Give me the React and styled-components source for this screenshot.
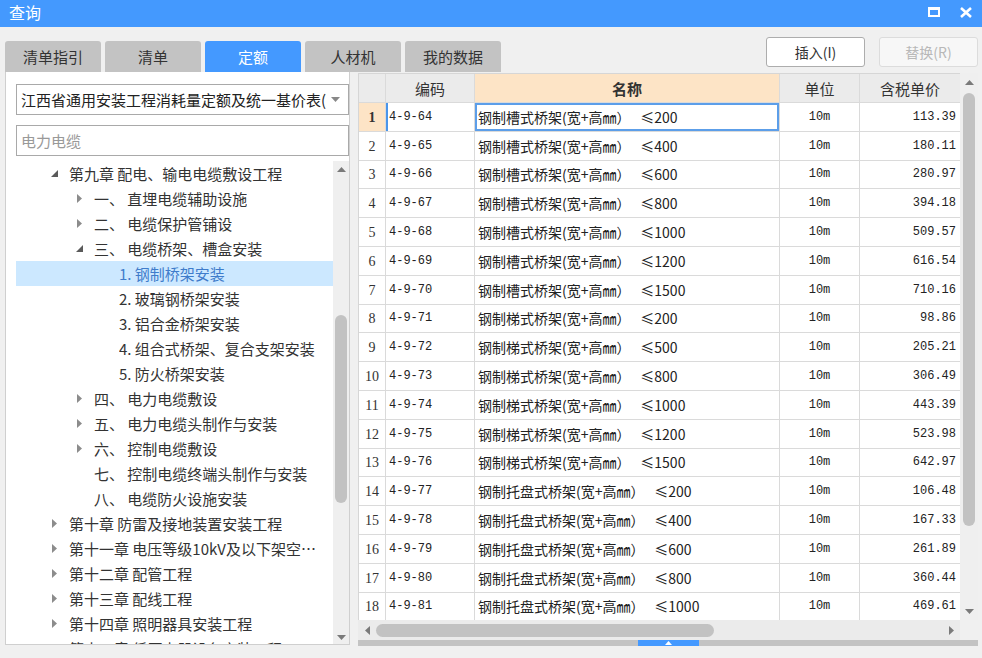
import React from 'react';
import styled, { createGlobalStyle } from 'styled-components';

const GlobalStyle = createGlobalStyle`
  html, body {
    margin: 0;
    padding: 0;
    background: #f0f0f0;
  }
  body {
    font-family: "Noto Sans CJK SC", "Noto Sans", sans-serif;
  }
  * {
    box-sizing: border-box;
  }
`;

const tabs = ['清单指引', '清单', '定额', '人材机', '我的数据'];

const tree = [
  { level: 0, label: '第九章 配电、输电电缆敷设工程', arrow: 'open' },
  { level: 1, label: '一、 直埋电缆辅助设施', arrow: 'closed' },
  { level: 1, label: '二、 电缆保护管铺设', arrow: 'closed' },
  { level: 1, label: '三、 电缆桥架、槽盒安装', arrow: 'open' },
  { level: 2, label: '1. 钢制桥架安装', selected: true },
  { level: 2, label: '2. 玻璃钢桥架安装' },
  { level: 2, label: '3. 铝合金桥架安装' },
  { level: 2, label: '4. 组合式桥架、复合支架安装' },
  { level: 2, label: '5. 防火桥架安装' },
  { level: 1, label: '四、 电力电缆敷设', arrow: 'closed' },
  { level: 1, label: '五、 电力电缆头制作与安装', arrow: 'closed' },
  { level: 1, label: '六、 控制电缆敷设', arrow: 'closed' },
  { level: 1, label: '七、 控制电缆终端头制作与安装' },
  { level: 1, label: '八、 电缆防火设施安装' },
  { level: 0, label: '第十章 防雷及接地装置安装工程', arrow: 'closed' },
  { level: 0, label: '第十一章 电压等级10kV及以下架空配电线路工程', arrow: 'closed' },
  { level: 0, label: '第十二章 配管工程', arrow: 'closed' },
  { level: 0, label: '第十三章 配线工程', arrow: 'closed' },
  { level: 0, label: '第十四章 照明器具安装工程', arrow: 'closed' },
  { level: 0, label: '第十五章 低压电器设备安装工程', arrow: 'closed' },
];

const rows = [
  ['4-9-64', '钢制槽式桥架', '200', '113.39'],
  ['4-9-65', '钢制槽式桥架', '400', '180.11'],
  ['4-9-66', '钢制槽式桥架', '600', '280.97'],
  ['4-9-67', '钢制槽式桥架', '800', '394.18'],
  ['4-9-68', '钢制槽式桥架', '1000', '509.57'],
  ['4-9-69', '钢制槽式桥架', '1200', '616.54'],
  ['4-9-70', '钢制槽式桥架', '1500', '710.16'],
  ['4-9-71', '钢制梯式桥架', '200', '98.86'],
  ['4-9-72', '钢制梯式桥架', '500', '205.21'],
  ['4-9-73', '钢制梯式桥架', '800', '306.49'],
  ['4-9-74', '钢制梯式桥架', '1000', '443.39'],
  ['4-9-75', '钢制梯式桥架', '1200', '523.98'],
  ['4-9-76', '钢制梯式桥架', '1500', '642.97'],
  ['4-9-77', '钢制托盘式桥架', '200', '106.48'],
  ['4-9-78', '钢制托盘式桥架', '400', '167.33'],
  ['4-9-79', '钢制托盘式桥架', '600', '261.89'],
  ['4-9-80', '钢制托盘式桥架', '800', '360.44'],
  ['4-9-81', '钢制托盘式桥架', '1000', '469.61'],
];

const Arrow = ({ dir, color = '#7a7a7a' }) => {
  const paths = {
    up: 'M0 5 L4.5 0 L9 5Z',
    down: 'M0 0 L4.5 5 L9 0Z',
    left: 'M5 0 L0 4.5 L5 9Z',
    right: 'M0 0 L5 4.5 L0 9Z',
  };
  const vertical = dir === 'up' || dir === 'down';
  return (
    <svg width={vertical ? 9 : 5} height={vertical ? 5 : 9} viewBox={vertical ? '0 0 9 5' : '0 0 5 9'}>
      <path d={paths[dir]} fill={color} />
    </svg>
  );
};

const TreeToggle = ({ type }) => {
  if (type === 'open') {
    return (
      <svg width="7" height="7" viewBox="0 0 7 7">
        <path d="M7 0 L7 7 L0 7Z" fill="#5a5a5a" />
      </svg>
    );
  }
  if (type === 'closed') {
    return (
      <svg width="5" height="9" viewBox="0 0 5 9">
        <path d="M0 0 L5 4.5 L0 9Z" fill="#8c8c8c" />
      </svg>
    );
  }
  return null;
};

const App = () => {
  return (
    <Window>
      <GlobalStyle />
      <TitleBar>
        <Title>查询</Title>
        <WinButton>
          <MaxBox />
        </WinButton>
        <WinButton>
          <svg width="12" height="11" viewBox="0 0 12 11">
            <path d="M1 1 L11 10 M11 1 L1 10" stroke="#fff" strokeWidth="2.6" />
          </svg>
        </WinButton>
      </TitleBar>

      <Toolbar>
        <Tabs>
          {tabs.map((t) => (
            <Tab key={t} $active={t === '定额'}>{t}</Tab>
          ))}
        </Tabs>
        <Actions>
          <ActionButton>插入(I)</ActionButton>
          <ActionButton $disabled>替换(R)</ActionButton>
        </Actions>
      </Toolbar>

      <Body>
        <LeftPanel>
          <Select>
            <SelectText>江西省通用安装工程消耗量定额及统一基价表(</SelectText>
            <Arrow dir="down" color="#888" />
          </Select>
          <Search>电力电缆</Search>
          <TreeWrap>
            <TreeList>
              {tree.map((n, i) => (
                <TreeRow key={i} $level={n.level} $selected={n.selected}>
                  <ToggleBox>
                    <TreeToggle type={n.arrow} />
                  </ToggleBox>
                  <TreeLabel>{n.label}</TreeLabel>
                </TreeRow>
              ))}
            </TreeList>
            <VScroll $width={16}>
              <ScrollArrow $size={16}>
                <Arrow dir="up" />
              </ScrollArrow>
              <VThumb $top={138} $height={188} $width={12} />
              <Spacer />
              <ScrollArrow $size={14}>
                <Arrow dir="down" />
              </ScrollArrow>
            </VScroll>
          </TreeWrap>
        </LeftPanel>

        <RightPanel>
          <GridArea>
            <Table>
              <HeadCell />
              <HeadCell>编码</HeadCell>
              <HeadCell $accent>名称</HeadCell>
              <HeadCell>单位</HeadCell>
              <HeadCell>含税单价</HeadCell>
              {rows.map((r, i) => (
                <React.Fragment key={r[0]}>
                  <NumCell $current={i === 0}>{i + 1}</NumCell>
                  <CodeCell $current={i === 0}>{r[0]}</CodeCell>
                  <NameCell $current={i === 0}>
                    {r[1]}(宽+高㎜）{'\u2002\u2009'}≤{r[2]}
                  </NameCell>
                  <UnitCell>10m</UnitCell>
                  <PriceCell>{r[3]}</PriceCell>
                </React.Fragment>
              ))}
            </Table>
            <VScroll $width={18}>
              <ScrollArrow $size={18}>
                <Arrow dir="up" />
              </ScrollArrow>
              <VThumb $top={2} $height={433} $width={12} />
              <Spacer />
              <ScrollArrow $size={18}>
                <Arrow dir="down" />
              </ScrollArrow>
            </VScroll>
          </GridArea>
          <HScrollRow>
            <HScroll>
              <HArrow>
                <Arrow dir="left" />
              </HArrow>
              <HThumb />
              <Spacer />
              <HArrow>
                <Arrow dir="right" />
              </HArrow>
            </HScroll>
            <Corner />
          </HScrollRow>
          <Splitter>
            <SplitHandle>
              <Arrow dir="up" color="#fff" />
            </SplitHandle>
          </Splitter>
        </RightPanel>
      </Body>
    </Window>
  );
};

const Window = styled.div`
  width: 982px;
  height: 658px;
  display: flex;
  flex-direction: column;
  background: #f0f0f0;
  overflow: hidden;
`;

const TitleBar = styled.div`
  height: 27px;
  flex: none;
  display: flex;
  align-items: center;
  padding: 0 0 3px 9px;
  background: #4499fe;
  color: #fff;
  font-size: 16px;
`;

const Title = styled.span`
  flex: 1;
`;

const WinButton = styled.span`
  width: 32px;
  display: flex;
  justify-content: center;
  align-items: center;
`;

const MaxBox = styled.span`
  width: 12px;
  height: 10px;
  border: 2px solid #fff;
  border-top-width: 3px;
`;

const Toolbar = styled.div`
  height: 45px;
  flex: none;
  display: flex;
  padding: 0 4px 0 5px;
`;

const Tabs = styled.div`
  display: flex;
  gap: 4px;
  align-self: flex-end;
`;

const Tab = styled.div`
  width: 96px;
  height: 31px;
  display: flex;
  align-items: center;
  justify-content: center;
  border-radius: 3px 3px 0 0;
  background: ${(p) => (p.$active ? '#4499ff' : '#c3c3c3')};
  color: ${(p) => (p.$active ? '#fff' : '#333')};
  font-size: 15px;
`;

const Actions = styled.div`
  margin-left: auto;
  margin-top: 10px;
  display: flex;
  gap: 14px;
  align-self: flex-start;
`;

const ActionButton = styled.div`
  width: 99px;
  height: 30px;
  display: flex;
  align-items: center;
  justify-content: center;
  border: 1px solid ${(p) => (p.$disabled ? '#dcdcdc' : '#adadad')};
  border-radius: 3px;
  background: ${(p) => (p.$disabled ? '#f7f7f7' : '#fff')};
  color: ${(p) => (p.$disabled ? '#b8b8b8' : '#333')};
  font-size: 14px;
`;

const Body = styled.div`
  height: 574px;
  flex: none;
  display: flex;
  gap: 8px;
  padding: 0 4px 0 5px;
`;

const LeftPanel = styled.div`
  width: 345px;
  height: 573px;
  display: flex;
  flex-direction: column;
  padding: 12px 0 0 10px;
  background: #fff;
  border: 1px solid #cfcfcf;
  border-top: none;
`;

const Select = styled.div`
  height: 31px;
  flex: none;
  display: flex;
  align-items: center;
  gap: 4px;
  padding: 0 8px 0 4px;
  border: 1px solid #a9a9a9;
  font-size: 15px;
  color: #222;
`;

const SelectText = styled.span`
  flex: 1;
  overflow: hidden;
  white-space: nowrap;
`;

const Search = styled.div`
  height: 31px;
  flex: none;
  margin-top: 10px;
  display: flex;
  align-items: center;
  padding-left: 4px;
  border: 1px solid #a9a9a9;
  font-size: 15px;
  color: #999;
`;

const TreeWrap = styled.div`
  flex: 1;
  min-height: 0;
  margin-top: 5px;
  display: flex;
`;

const TreeList = styled.div`
  flex: 1;
  min-width: 0;
  overflow: hidden;
`;

const TreeRow = styled.div`
  height: 25px;
  display: flex;
  align-items: center;
  padding-left: ${(p) => 30 + p.$level * 25}px;
  padding-right: 10px;
  background: ${(p) => (p.$selected ? '#cce8ff' : 'transparent')};
  color: ${(p) => (p.$selected ? '#3f7ccb' : '#333')};
  font-size: 15px;
`;

const ToggleBox = styled.span`
  width: 16px;
  flex: none;
  display: flex;
  justify-content: center;
  align-items: center;
`;

const TreeLabel = styled.span`
  margin-left: 7px;
  min-width: 0;
  overflow: hidden;
  white-space: nowrap;
  text-overflow: ellipsis;
`;

const VScroll = styled.div`
  width: ${(p) => p.$width}px;
  flex: none;
  display: flex;
  flex-direction: column;
  align-items: center;
  background: #efefef;
`;

const ScrollArrow = styled.div`
  height: ${(p) => p.$size}px;
  flex: none;
  display: flex;
  align-items: center;
  justify-content: center;
`;

const VThumb = styled.div`
  width: ${(p) => p.$width}px;
  height: ${(p) => p.$height}px;
  margin-top: ${(p) => p.$top}px;
  flex: none;
  border-radius: 6px;
  background: #c2c2c2;
`;

const Spacer = styled.div`
  flex: 1;
`;

const RightPanel = styled.div`
  width: 620px;
  margin-top: 1px;
  display: flex;
  flex-direction: column;
`;

const GridArea = styled.div`
  height: 547px;
  flex: none;
  display: flex;
  overflow: hidden;
  background: #fff;
`;

const Table = styled.div`
  display: grid;
  grid-template-columns: 27px 89px 305px 80px 101px;
  grid-template-rows: 29px;
  grid-auto-rows: 28.8px;
  align-content: start;
  border-left: 1px solid #d6d6d6;
  border-top: 1px solid #d6d6d6;
  overflow: hidden;
`;

const Cell = styled.div`
  display: flex;
  align-items: center;
  border-right: 1px solid #dadada;
  border-bottom: 1px solid #dadada;
  white-space: nowrap;
  overflow: hidden;
  color: #222;
`;

const HeadCell = styled(Cell)`
  justify-content: center;
  background: ${(p) => (p.$accent ? '#fde4c6' : '#ebebeb')};
  font-size: 15px;
  font-weight: ${(p) => (p.$accent ? 700 : 400)};
  color: #333;
`;

const NumCell = styled(Cell)`
  justify-content: center;
  padding-top: 2px;
  background: ${(p) => (p.$current ? '#fde4c6' : '#fff')};
  font-family: "Liberation Serif", serif;
  font-size: 14px;
  font-weight: ${(p) => (p.$current ? 700 : 400)};
  color: #333;
`;

const CodeCell = styled(Cell)`
  padding-left: 3px;
  font-family: "Liberation Mono", monospace;
  font-size: 12px;
  box-shadow: ${(p) => (p.$current ? 'inset 2px 0 0 #4a95ea' : 'none')};
`;

const NameCell = styled(Cell)`
  padding-left: 3px;
  font-size: 14px;
  box-shadow: ${(p) => (p.$current ? 'inset 0 0 0 2px #5c9ee9' : 'none')};
`;

const UnitCell = styled(Cell)`
  justify-content: center;
  font-family: "Liberation Mono", monospace;
  font-size: 12px;
`;

const PriceCell = styled(Cell)`
  justify-content: flex-end;
  padding-right: 4px;
  font-family: "Liberation Mono", monospace;
  font-size: 12px;
`;

const HScrollRow = styled.div`
  height: 20px;
  flex: none;
  display: flex;
`;

const HScroll = styled.div`
  flex: 1;
  display: flex;
  align-items: center;
  background: #ebebeb;
`;

const HArrow = styled.div`
  width: 18px;
  display: flex;
  justify-content: center;
`;

const HThumb = styled.div`
  width: 338px;
  height: 13px;
  border-radius: 7px;
  background: #c2c2c2;
`;

const Corner = styled.div`
  width: 18px;
  background: #f0f0f0;
`;

const Splitter = styled.div`
  height: 6px;
  flex: none;
  display: flex;
  justify-content: center;
  background: #c3c3c3;
`;

const SplitHandle = styled.div`
  width: 61px;
  display: flex;
  align-items: center;
  justify-content: center;
  background: #4499ff;

  svg {
    width: 7px;
    height: 4px;
  }
`;

export default App;
